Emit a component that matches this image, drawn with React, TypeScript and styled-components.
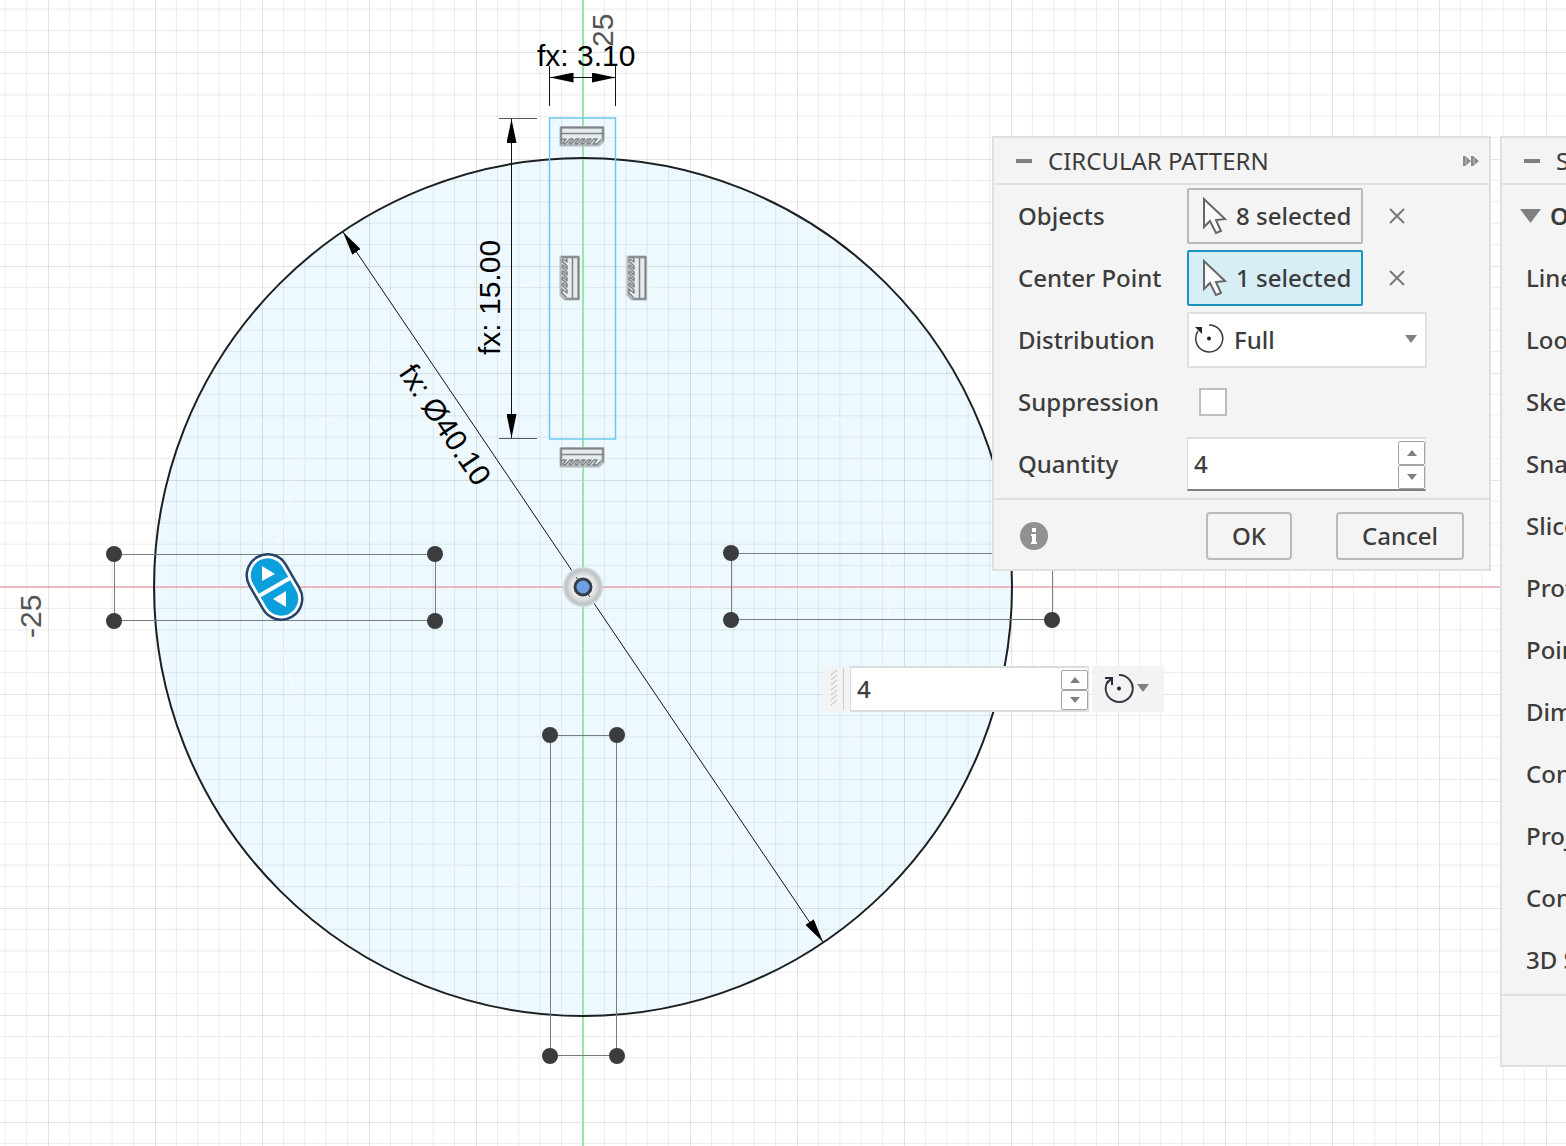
import React, { useState } from "react";
import styled, { createGlobalStyle } from "styled-components";

const UI_FONT = '"Noto Sans", "Open Sans", sans-serif';

const GlobalStyle = createGlobalStyle`
  *, *::before, *::after { box-sizing: border-box; }
  body { margin: 0; background: #fff; font-family: ${UI_FONT}; color: #3c3c3c; }
  button, input, select { font: inherit; color: inherit; margin: 0; }
`;

const Workspace = styled.main`
  position: relative;
  min-height: 100vh;
  overflow: hidden;
`;

const Sketch = styled.svg`
  position: absolute;
  inset: 0;
  width: 100%;
  height: 100%;
  display: block;

  text {
    font-family: "Liberation Sans", Arial, sans-serif;
    font-size: 30px;
  }
`;

const Dock = styled.div`
  position: relative;
  display: flex;
  justify-content: flex-end;
  align-items: flex-start;
  gap: 9px;
  padding-top: 136px;
`;

const Panel = styled.section<{ $tucked?: boolean }>`
  flex: none;
  width: 499px;
  margin-right: ${(p) => (p.$tucked ? "-433px" : "0")};
  background: #f4f4f4;
  border: 2px solid #e0e0e0;
`;

const PanelHeader = styled.header`
  display: flex;
  align-items: center;
  gap: 16px;
  height: 47px;
  padding: 0 10px 0 22px;
  border-bottom: 2px solid #e0e0e0;
`;

const PanelTitle = styled.h2`
  flex: 1;
  margin: 0;
  font-size: 24px;
  line-height: 32px;
  font-weight: 400;
  white-space: nowrap;
`;

const IconButton = styled.button`
  display: flex;
  padding: 0;
  border: 0;
  background: none;
  color: #808080;
`;

const Rows = styled.div`
  padding-bottom: 3px;
`;

const Row = styled.div`
  display: grid;
  grid-template-columns: 169px 1fr;
  align-items: center;
  height: 62px;
  padding-left: 24px;
  font-size: 24px;
  line-height: 32px;
  font-weight: 500;
  white-space: nowrap;
`;

const Control = styled.div`
  display: flex;
  align-items: center;
  gap: 26px;
`;

const Picker = styled.button<{ $active?: boolean }>`
  display: flex;
  align-items: center;
  gap: 8px;
  height: 56px;
  padding: 0 10px 0 13px;
  border: 2px solid ${(p) => (p.$active ? "#1b93bf" : "#b8b8b8")};
  border-radius: 2px;
  background: ${(p) => (p.$active ? "#d7eef7" : "#f4f4f4")};
`;

const SelectBox = styled.div`
  position: relative;
  width: 240px;
  height: 56px;

  svg { position: absolute; pointer-events: none; }
  svg:first-child { left: 7px; top: 9px; }
  svg:last-child { right: 10px; top: 23px; }
`;

const Select = styled.select`
  appearance: none;
  width: 100%;
  height: 100%;
  padding: 0 40px 0 45px;
  border: 2px solid #e0e0e0;
  background: #fff;
`;

const Checkbox = styled.input`
  appearance: none;
  width: 28px;
  height: 28px;
  margin-left: 12px;
  border: 2px solid #bebebe;
  background: #fff;
`;

const NumberBox = styled.div<{ $underlined?: boolean }>`
  display: flex;
  align-items: center;
  width: 239px;
  height: ${(p) => (p.$underlined ? "54px" : "46px")};
  border: 1px solid #dcdcdc;
  border-top-width: 2px;
  border-bottom: 2px solid ${(p) => (p.$underlined ? "#808080" : "#dcdcdc")};
  background: #fff;
`;

const NumberInput = styled.input`
  flex: 1;
  min-width: 0;
  height: 100%;
  padding: 0 6px 2px;
  border: 0;
  outline: 0;
  background: none;
  font-size: 24px;
  font-weight: 500;
`;

const Spinner = styled.div`
  display: flex;
  flex-direction: column;
  width: 27px;
  height: 100%;
  padding: 2px 0 0;
`;

const Step = styled.button`
  display: flex;
  flex: 1;
  align-items: center;
  justify-content: center;
  padding: 0;
  border: 1px solid #a4a4a4;
  border-radius: 2px;
  background: #fff;
  color: #808080;
`;

const PanelFooter = styled.footer`
  display: flex;
  align-items: center;
  gap: 44px;
  height: 71px;
  padding: 2px 25px 0 26px;
  border-top: 2px solid #e0e0e0;
`;

const InfoIcon = styled.svg`
  margin-right: auto;
`;

const ActionButton = styled.button`
  height: 48px;
  padding: 0 24px;
  border: 2px solid #bababa;
  border-radius: 4px;
  background: #f4f4f4;
  font-size: 24px;
  line-height: 32px;
  font-weight: 500;
`;

const GroupToggle = styled.button`
  display: flex;
  align-items: center;
  gap: 9px;
  height: 62px;
  padding: 0 0 0 18px;
  border: 0;
  background: none;
  font-size: 24px;
  line-height: 32px;
  font-weight: 600;
`;

const FloatingBar = styled.div`
  position: absolute;
  left: 822px;
  top: 666px;
  display: flex;
`;

const Grip = styled.div`
  display: flex;
  align-items: center;
  width: 28px;
  padding-left: 9px;
  background: rgba(242, 242, 242, 0.85);
`;

const ModeButton = styled.button`
  display: flex;
  align-items: center;
  gap: 3px;
  width: 72px;
  height: 46px;
  margin-left: 3px;
  padding: 0 0 2px 12px;
  border: 0;
  background: #f3f3f3;
  color: #808080;
`;

const Minus = () => (
  <svg width="16" height="4" aria-hidden="true"><rect width="16" height="4" fill="#808080" /></svg>
);

const Forward = () => (
  <svg width="16" height="12" viewBox="0 0 16 12" aria-hidden="true">
    <path d="M0 1h2l6 5-6 5H0zM8 1h2l6 5-6 5H8z" fill="#8a8a8a" />
    <path d="M3 3v6M11 3v6" stroke="#c4c4c4" />
  </svg>
);

const Cursor = () => (
  <svg width="26" height="40" viewBox="0 0 26 40" aria-hidden="true">
    <path d="M2 3v28l6-6 6 12 5-2-5-11 9-1z" fill="#fafafa" stroke="#666" strokeWidth="2" />
  </svg>
);

const Cross = () => (
  <svg width="16" height="16" viewBox="0 0 16 16" aria-hidden="true">
    <path d="M1 1l14 14M15 1L1 15" stroke="#787878" strokeWidth="2" />
  </svg>
);

const Triangle = ({ up, w = 10, h = 6 }: { up?: boolean; w?: number; h?: number }) => (
  <svg width={w} height={h} aria-hidden="true">
    <path d={up ? `M0 ${h}L${w / 2} 0L${w} ${h}z` : `M0 0H${w}L${w / 2} ${h}z`} fill="#808080" />
  </svg>
);

const FullCircle = ({ bold }: { bold?: boolean }) => (
  <svg width="30" height="34" viewBox="0 0 30 34" aria-hidden="true">
    <path d="M15 4a13.500 13.500 0 1 1-11 6" fill="none" stroke="#333a44" strokeWidth={bold ? 2 : 1.5} />
    {bold ? (
      <path d="M1 7h7v7M8 7l-5 5" fill="none" stroke="#272d3c" strokeWidth="2" />
    ) : (
      <path d="M1 6h7v7z" fill="#222" />
    )}
    <circle cx="15" cy="17.500" r="2" fill="#222" />
  </svg>
);

function Quantity({ id, label, underlined }: { id: string; label?: string; underlined?: boolean }) {
  const [value, setValue] = useState(4);
  return (
    <NumberBox $underlined={underlined}>
      <NumberInput
        id={id}
        aria-label={label}
        inputMode="numeric"
        value={value}
        onChange={(e) => setValue(Number(e.target.value) || 0)}
      />
      <Spinner>
        <Step type="button" aria-label="Increase" onClick={() => setValue(value + 1)}><Triangle up /></Step>
        <Step type="button" aria-label="Decrease" onClick={() => setValue(value - 1)}><Triangle /></Step>
      </Spinner>
    </NumberBox>
  );
}

const Fixed = ({ at, vertical }: { at: [number, number]; vertical?: boolean }) => (
  <g
    transform={`translate(${at[0]} ${at[1]})${vertical ? " rotate(90)" : ""}`}
    fill="none"
    stroke="#7f8385"
    strokeWidth="1.500"
    strokeLinejoin="round"
    strokeLinecap="round"
  >
    <path d="M-21 -8.500H21V5L17 9H-21z" fill="#e6ebed" stroke="#b4b9bb" strokeWidth="3" />
    <path d="M-21 -8.500H21V-2.500H-21zM-21 -2.500V3M21 -2.500V4" />
    <path d="M-21 8V4l3-1h2l-3 4 2 1 5-5h3l-4 4 2 1 5-5h3l-4 4 2 1 5-5h3l-4 4 2 1 5-5h3l-4 4 2 1 5-5h3l-4 5h4l4-4" />
  </g>
);

const dots: [number, number][] = [
  [114, 554], [435, 554], [114, 621], [435, 621],
  [731, 553], [731, 620], [1052, 620],
  [550, 735], [617, 735], [550, 1056], [617, 1056],
];

const dimensionLines = ["M549.500 77.500H615.500", "M511.500 119V438", "M343 232L823 942"];

function SketchCanvas() {
  return (
    <Sketch role="img" aria-label="Sketch canvas">
      <defs>
        <pattern id="grid" x="48" y="52" width="107" height="107" patternUnits="userSpaceOnUse">
          <path
            d="M21.400 0V107M42.800 0V107M64.200 0V107M85.600 0V107M0 21.400H107M0 42.800H107M0 64.200H107M0 85.600H107"
            stroke="#000"
            strokeOpacity="0.065"
          />
          <path d="M0.500 0V107M0 0.500H107" stroke="#000" strokeOpacity="0.110" />
        </pattern>
        <marker id="arrow" viewBox="0 0 24 10" refX="24" refY="5" markerWidth="24" markerHeight="10" markerUnits="userSpaceOnUse" orient="auto-start-reverse">
          <path d="M0 0L24 5L0 10z" />
        </marker>
        <radialGradient id="halo">
          <stop offset="0.400" stopColor="#f4f4f4" />
          <stop offset="0.650" stopColor="#dcdedf" />
          <stop offset="0.850" stopColor="#bfc3c5" />
          <stop offset="1" stopColor="#d4dde0" />
        </radialGradient>
      </defs>

      <circle cx="583" cy="587" r="429" fill="#edf9fe" />
      <rect x="549" y="118" width="67" height="60" fill="#edf9fe" />
      <rect width="100%" height="100%" fill="url(#grid)" />
      <circle cx="583" cy="587" r="307" fill="none" stroke="#fff" strokeOpacity="0.500" />
      <path d="M0 587H3000" stroke="#eda6ae" strokeWidth="1.500" />
      <path d="M583 0V3000" stroke="#96e6a4" strokeWidth="2" />
      <circle cx="583" cy="587" r="429" fill="none" stroke="#1d2022" strokeWidth="2" />

      <g fill="none" stroke="#777c7e">
        <rect x="114.500" y="554.500" width="321" height="66" />
        <rect x="731.500" y="553.500" width="321" height="66" />
        <rect x="550.500" y="735.500" width="66" height="320" />
      </g>
      <rect x="549.500" y="118" width="66" height="321" fill="none" stroke="#6cc8ee" strokeWidth="1.500" />
      {dots.map(([x, y]) => (
        <circle key={`${x}-${y}`} cx={x} cy={y} r="8" fill="#3a3c3d" />
      ))}

      <Fixed at={[582, 136]} />
      <Fixed at={[582, 457]} />
      <Fixed at={[570, 278]} vertical />
      <Fixed at={[637, 278]} vertical />

      <text transform="translate(613 47) rotate(-90)" fill="#555">25</text>
      <text transform="translate(41 638) rotate(-90)" fill="#555">-25</text>

      <g fill="none" stroke="#111">
        <path d="M549.500 66V106M615.500 66V106" />
        <path d="M499 118.500H537M499 438.500H537" stroke="#555" />
        {dimensionLines.map((d) => (
          <path key={d} d={d} markerStart="url(#arrow)" markerEnd="url(#arrow)" />
        ))}
      </g>
      <text x="537" y="66">fx: 3.10</text>
      <text transform="translate(500 355) rotate(-90)">fx: 15.00</text>
      <text transform="translate(398 373) rotate(56)">fx: Ø40.10</text>

      <circle cx="583" cy="587" r="20" fill="url(#halo)" />
      <path d="M576 577L590 597" stroke="#444" />
      <circle cx="583" cy="587" r="8" fill="#6f9fe0" stroke="#343e4b" strokeWidth="3" />

      <g transform="rotate(-30 274.500 587)">
        <rect x="253.500" y="552.500" width="42" height="69" rx="21" fill="#fff" stroke="#264468" strokeWidth="2.500" />
        <rect x="257.500" y="556.500" width="34" height="61" rx="17" fill="#0b9fdc" />
        <path d="M256 587H293" stroke="#fff" strokeWidth="4" />
      </g>
      <path d="M262 566V581L275 574zM286 591V607L273 599z" fill="#fff" />
    </Sketch>
  );
}

const paletteRows = [
  "Linetype", "Look At", "Sketch Grid", "Snap", "Slice", "Profile", "Points",
  "Dimensions", "Constraints", "Projected Geometries", "Construction Geometries", "3D Sketch",
];

export default function App() {
  return (
    <>
      <GlobalStyle />
      <Workspace>
        <SketchCanvas />
        <FloatingBar>
          <Grip>
            <svg width="18" height="42" aria-hidden="true">
              {[2, 7, 12, 17, 22, 27, 32].map((y) => (
                <path key={y} d={`M0 ${y + 5}l6-5`} stroke="#bbb" />
              ))}
              <path d="M12.500 0V42" stroke="#ccc" />
            </svg>
          </Grip>
          <Quantity id="canvas-quantity" label="Quantity on canvas" />
          <ModeButton type="button" aria-label="Distribution type">
            <FullCircle bold />
            <Triangle w={12} h={8} />
          </ModeButton>
        </FloatingBar>

        <Dock>
          <Panel>
            <PanelHeader>
              <IconButton type="button" aria-label="Collapse"><Minus /></IconButton>
              <PanelTitle>CIRCULAR PATTERN</PanelTitle>
              <IconButton type="button" aria-label="Dock panel"><Forward /></IconButton>
            </PanelHeader>
            <Rows>
              <Row>
                <label htmlFor="objects">Objects</label>
                <Control>
                  <Picker id="objects" type="button"><Cursor />8 selected</Picker>
                  <IconButton type="button" aria-label="Clear objects"><Cross /></IconButton>
                </Control>
              </Row>
              <Row>
                <label htmlFor="center">Center Point</label>
                <Control>
                  <Picker id="center" type="button" $active><Cursor />1 selected</Picker>
                  <IconButton type="button" aria-label="Clear center point"><Cross /></IconButton>
                </Control>
              </Row>
              <Row>
                <label htmlFor="distribution">Distribution</label>
                <SelectBox>
                  <FullCircle />
                  <Select id="distribution"><option>Full</option></Select>
                  <Triangle w={12} h={8} />
                </SelectBox>
              </Row>
              <Row>
                <label htmlFor="suppression">Suppression</label>
                <Control><Checkbox id="suppression" type="checkbox" /></Control>
              </Row>
              <Row>
                <label htmlFor="quantity">Quantity</label>
                <Quantity id="quantity" underlined />
              </Row>
            </Rows>
            <PanelFooter>
              <InfoIcon width="28" height="28" viewBox="0 0 28 28" aria-hidden="true">
                <circle cx="14" cy="14" r="14" fill="#919191" />
                <path d="M12 6h4v4h-4zM11 12h5v8h1v2h-6v-2h1v-6h-1z" fill="#fff" />
              </InfoIcon>
              <ActionButton type="button">OK</ActionButton>
              <ActionButton type="button">Cancel</ActionButton>
            </PanelFooter>
          </Panel>

          <Panel $tucked>
            <PanelHeader>
              <IconButton type="button" aria-label="Collapse"><Minus /></IconButton>
              <PanelTitle>SKETCH PALETTE</PanelTitle>
            </PanelHeader>
            <Rows>
              <GroupToggle type="button"><Triangle w={21} h={14} />Options</GroupToggle>
              {paletteRows.map((name) => (
                <Row key={name}>{name}</Row>
              ))}
            </Rows>
            <PanelFooter />
          </Panel>
        </Dock>
      </Workspace>
    </>
  );
}
